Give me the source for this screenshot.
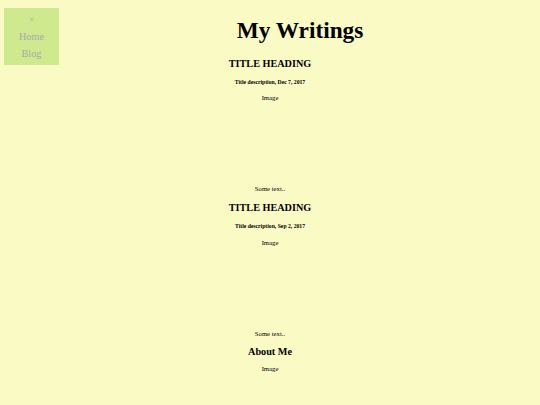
const posts = [
  { date: 'Dec 7, 2017' },
  { date: 'Sep 2, 2017' },
];

const Sidebar = () => (
  <nav className="absolute left-[4px] top-[8px] w-[55px] h-[57px] bg-[#cee98e] text-center text-[#a9a9a9]">
    <div className="pt-[5px] leading-[12px] text-[9px]">×</div>
    <a className="block mt-[5px] leading-[14px] text-[10.3px]">Home</a>
    <a className="block mt-[3px] leading-[14px] text-[10.3px]">Blog</a>
  </nav>
);

const Post = ({ date, first }) => (
  <div>
    <h2 className={`${first ? 'mt-[14px]' : 'mt-[9px]'} leading-[12px] text-[10.2px] font-bold`}>TITLE HEADING</h2>
    <h5 className="mt-[8px] leading-[8px] text-[5.7px] font-bold">Title description, {date}</h5>
    <p className={`${first ? 'mt-[8px]' : 'mt-[9px]'} leading-[8px] text-[6.7px]`}>Image</p>
    <p className="mt-[83px] leading-[8px] text-[6.7px]">Some text..</p>
  </div>
);

export default function App() {
  return (
    <div
      className="relative w-[540px] h-[405px] overflow-hidden bg-[#fafac5] text-black"
      style={{ fontFamily: '"Liberation Serif", "Times New Roman", serif' }}
    >
      <Sidebar />
      <header className="pl-[60px] pt-[16px] text-center">
        <h1 className="leading-[28px] text-[23.3px] font-bold">My Writings</h1>
      </header>
      <main className="text-center">
        {posts.map((p, i) => (
          <Post key={p.date} date={p.date} first={i === 0} />
        ))}
        <h2 className="mt-[8px] leading-[12px] text-[10.2px] font-bold">About Me</h2>
        <p className="mt-[7px] leading-[8px] text-[6.7px]">Image</p>
      </main>
    </div>
  );
}
